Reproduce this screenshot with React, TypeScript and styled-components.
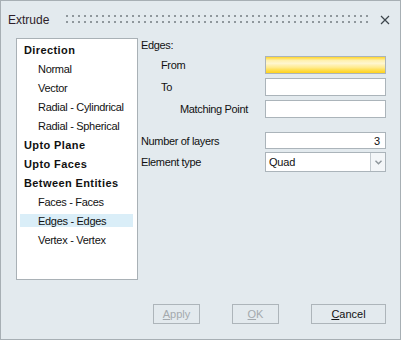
import React from "react";
import styled, { createGlobalStyle } from "styled-components";

const GlobalStyle = createGlobalStyle`
  html, body {
    margin: 0;
    padding: 0;
    background: #e3eaee;
  }
  * {
    box-sizing: border-box;
  }
`;

const Window = styled.div`
  width: 401px;
  height: 340px;
  border: 1px solid #a7afb4;
  background: #e3eaee;
  display: flex;
  flex-direction: column;
  font-family: "Liberation Sans", Arial, sans-serif;
  font-size: 11px;
  color: #111;
`;

const TitleBar = styled.div`
  height: 37px;
  display: flex;
  align-items: center;
  padding: 0 9px 0 7px;
  flex-shrink: 0;
`;

const Title = styled.span`
  font-size: 12px;
  color: #2e1e2a;
  width: 56px;
`;

const Grip = styled.div`
  flex: 1;
  height: 9px;
  margin-right: 8px;
  background-image: radial-gradient(circle, #8f979c 0.9px, transparent 1px);
  background-size: 6px 6px;
  background-position: 0 -2px;
`;

const CloseButton = styled.button`
  width: 12px;
  height: 12px;
  padding: 0;
  border: none;
  background: none;
  display: flex;
  align-items: center;
  justify-content: center;
`;

const Body = styled.div`
  display: flex;
  padding: 0 14px 0 15px;
  height: 242px;
`;

const Tree = styled.ul`
  width: 122px;
  height: 242px;
  margin: 0;
  padding: 1px 4px 0 3px;
  list-style: none;
  background: #fff;
  border: 1px solid #a9b1b6;
`;

const TreeItem = styled.li<{ $group?: boolean; $selected?: boolean }>`
  height: 19px;
  display: flex;
  align-items: center;
  padding-left: ${(p) => (p.$group ? "4px" : "18px")};
  font-weight: ${(p) => (p.$group ? "bold" : "normal")};
  letter-spacing: ${(p) => (p.$group ? "0.4px" : "-0.3px")};
  background: ${(p) =>
    p.$selected
      ? "linear-gradient(transparent 3px, #daeef8 3px, #daeef8 16px, transparent 16px)"
      : "transparent"};
  white-space: nowrap;
`;

const Panel = styled.div`
  flex: 1;
  display: flex;
  flex-direction: column;
  padding-left: 3px;
`;

const Row = styled.div<{ $top: number; $h: number }>`
  display: flex;
  align-items: center;
  height: ${(p) => p.$h}px;
  margin-top: ${(p) => p.$top}px;
`;

const Label = styled.span<{ $indent?: number }>`
  width: 124px;
  padding-left: ${(p) => p.$indent ?? 0}px;
  letter-spacing: -0.35px;
  white-space: nowrap;
`;

const Input = styled.div<{ $active?: boolean; $right?: boolean }>`
  flex: 1;
  height: 100%;
  border: 1px solid #abb4ba;
  background: ${(p) =>
    p.$active
      ? "linear-gradient(#ffd52b 0%, #fff1b0 22%, #fff6cf 40%, #ffeb8f 65%, #ffdc45 85%, #ffd21c 100%)"
      : "#fff"};
  display: flex;
  align-items: center;
  justify-content: ${(p) => (p.$right ? "flex-end" : "flex-start")};
  padding: 0 5px 0 4px;
`;

const Combo = styled.div`
  flex: 1;
  height: 100%;
  border: 1px solid #abb4ba;
  background: #fff;
  display: flex;
`;

const ComboValue = styled.span`
  flex: 1;
  display: flex;
  align-items: center;
  padding-left: 3px;
  letter-spacing: -0.2px;
`;

const ComboArrow = styled.span`
  width: 15px;
  border-left: 1px solid #c3cacf;
  background: #f3f6f8;
  display: flex;
  align-items: center;
  justify-content: center;
`;

const Footer = styled.div`
  flex: 1;
  display: flex;
  justify-content: flex-end;
  align-items: flex-start;
  gap: 32px;
  padding: 24px 14px 0 0;
`;

const Button = styled.button<{ $w: number }>`
  width: ${(p) => p.$w}px;
  height: 20px;
  border: 1px solid #adb5ba;
  background: #e3eaee;
  font-family: "Liberation Sans", Arial, sans-serif;
  font-size: 11px;
  color: ${(p) => (p.disabled ? "#a4a9ad" : "#111")};
  padding: 0;
  u {
    text-decoration: underline;
  }
`;

export default function App() {
  return (
    <>
      <GlobalStyle />
      <Window>
        <TitleBar>
          <Title>Extrude</Title>
          <Grip />
          <CloseButton aria-label="Close">
            <svg width="10" height="10" viewBox="0 0 10 10">
              <path d="M1 1 L9 9 M9 1 L1 9" stroke="#3d464c" strokeWidth="1.2" />
            </svg>
          </CloseButton>
        </TitleBar>
        <Body>
          <Tree>
            <TreeItem $group>Direction</TreeItem>
            <TreeItem>Normal</TreeItem>
            <TreeItem>Vector</TreeItem>
            <TreeItem>Radial - Cylindrical</TreeItem>
            <TreeItem>Radial - Spherical</TreeItem>
            <TreeItem $group>Upto Plane</TreeItem>
            <TreeItem $group>Upto Faces</TreeItem>
            <TreeItem $group>Between Entities</TreeItem>
            <TreeItem>Faces - Faces</TreeItem>
            <TreeItem $selected>Edges - Edges</TreeItem>
            <TreeItem>Vertex - Vertex</TreeItem>
          </Tree>
          <Panel>
            <Row $top={0} $h={13}>
              <Label>Edges:</Label>
            </Row>
            <Row $top={5} $h={18}>
              <Label $indent={20}>From</Label>
              <Input $active />
            </Row>
            <Row $top={4} $h={18}>
              <Label $indent={20}>To</Label>
              <Input />
            </Row>
            <Row $top={4} $h={18}>
              <Label $indent={39}>Matching Point</Label>
              <Input />
            </Row>
            <Row $top={14} $h={17}>
              <Label>Number of layers</Label>
              <Input $right>3</Input>
            </Row>
            <Row $top={3} $h={20}>
              <Label>Element type</Label>
              <Combo>
                <ComboValue>Quad</ComboValue>
                <ComboArrow>
                  <svg width="7" height="5" viewBox="0 0 7 5">
                    <path d="M0.5 0.8 L3.5 3.8 L6.5 0.8" stroke="#8d959a" strokeWidth="1.4" fill="none" />
                  </svg>
                </ComboArrow>
              </Combo>
            </Row>
          </Panel>
        </Body>
        <Footer>
          <Button $w={47} disabled>
            <u>A</u>pply
          </Button>
          <Button $w={47} disabled>
            <u>O</u>K
          </Button>
          <Button $w={75}>
            <u>C</u>ancel
          </Button>
        </Footer>
      </Window>
    </>
  );
}
